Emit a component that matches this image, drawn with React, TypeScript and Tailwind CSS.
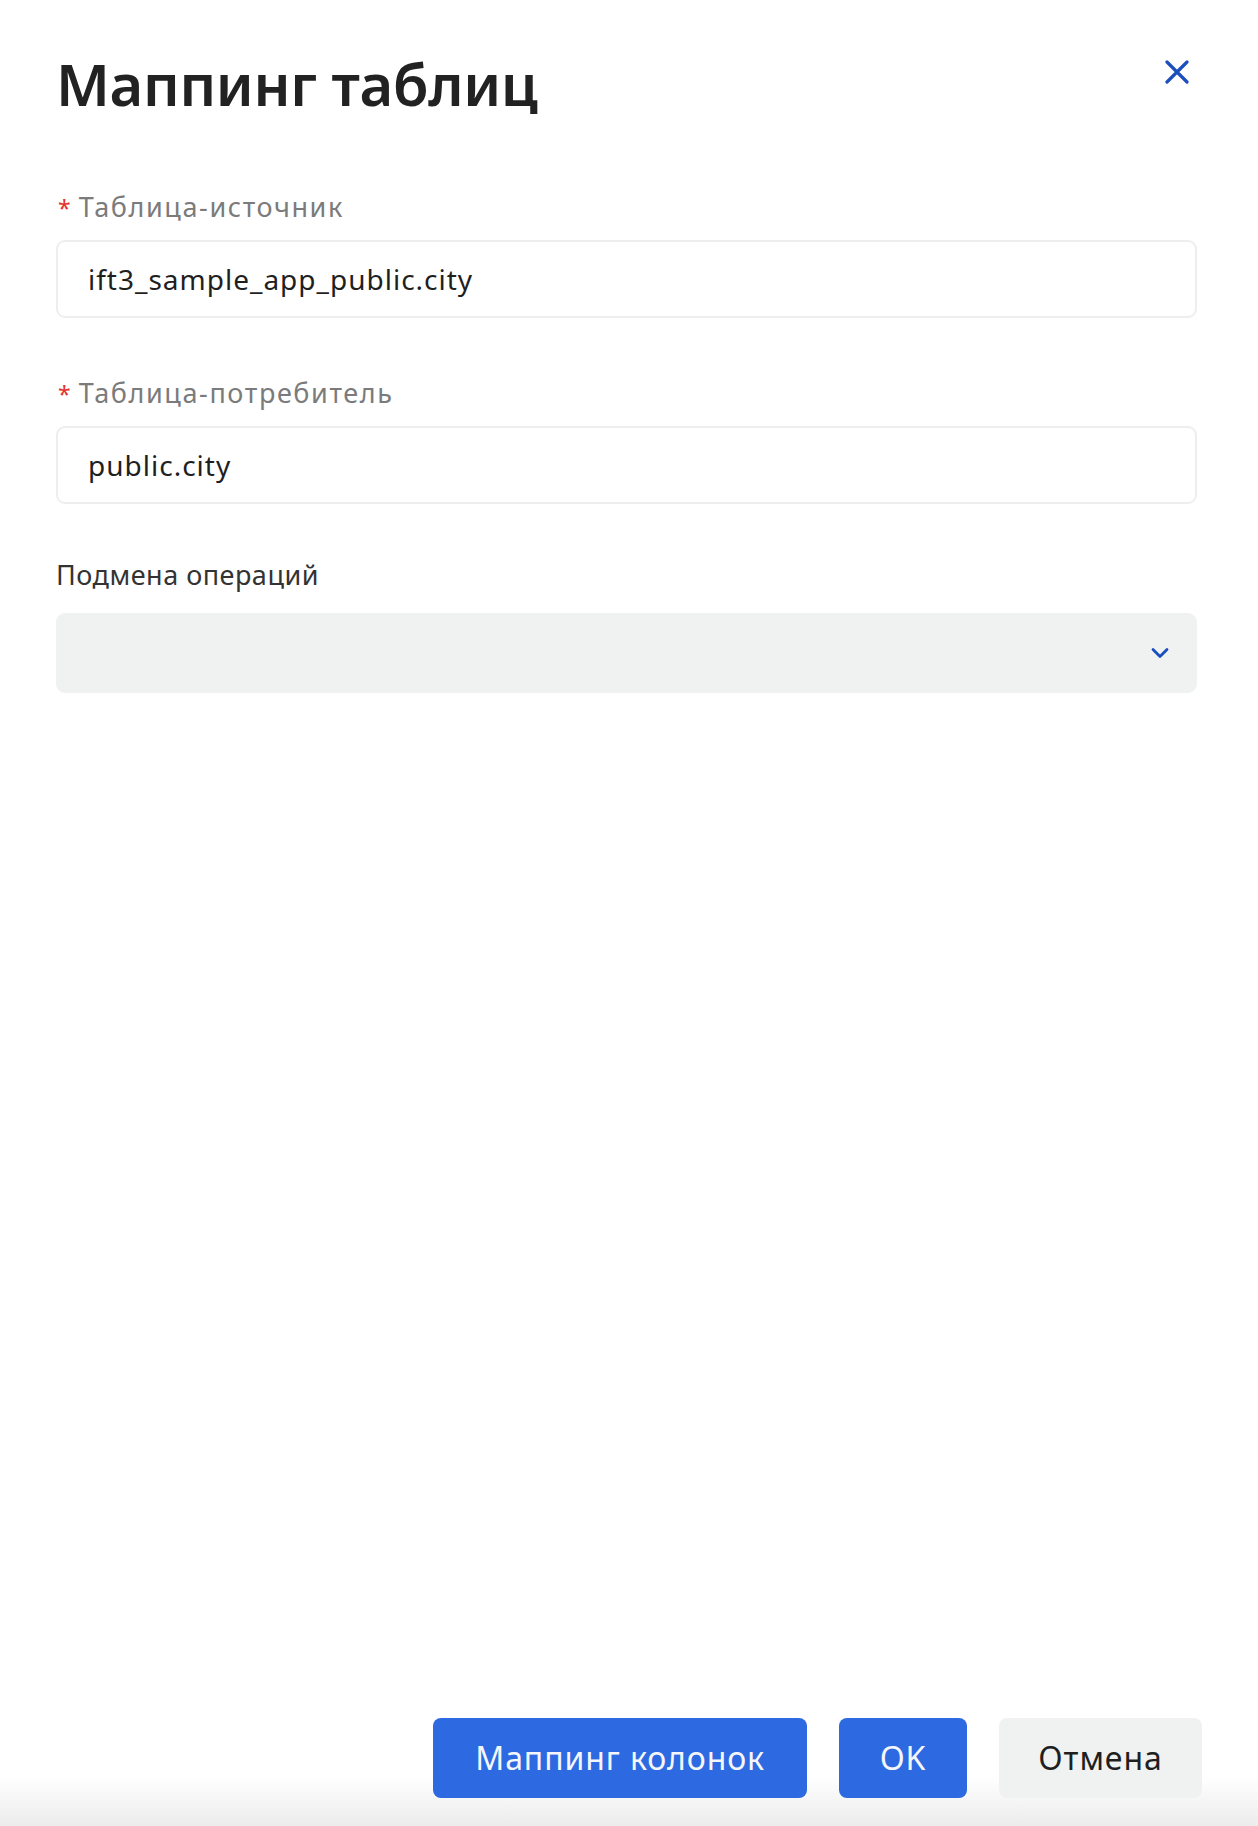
import React from "react";

const font = { fontFamily: '"Noto Sans", "Open Sans", sans-serif' };

function Label({ text, required }: { text: string; required?: boolean }) {
  return (
    <div className="flex items-baseline h-[36px] leading-[36px]">
      {required && <span className="text-[#e5322d] text-[23px] mr-[8px] ml-[2px]">*</span>}
      {required ? (
        <span className="text-[27px] tracking-[1.6px] text-[#7b7b7b]">{text}</span>
      ) : (
        <span className="text-[27px] tracking-[0.5px] text-[#333333]">{text}</span>
      )}
    </div>
  );
}

function Field({ value }: { value: string }) {
  return (
    <div className="h-[78px] rounded-[9px] border-2 border-[#eeeeee] bg-white flex items-center pl-[30px] text-[28px] tracking-[1px] text-[#1f1f1f]">
      {value}
    </div>
  );
}

export default function App() {
  return (
    <div className="w-[1258px] h-[1826px] bg-white flex flex-col text-[#222222]" style={font}>
      <div className="flex flex-col pl-[56px] pr-[61px] pt-[46px]">
        <div className="flex items-start justify-between">
          <h1 className="text-[58px] font-semibold leading-[76px] tracking-[-0.3px] text-[#222222]">Маппинг таблиц</h1>
          <button className="mt-[10px] mr-[4px] w-[32px] h-[32px] flex items-center justify-center">
            <svg width="24" height="24" viewBox="0 0 24 24" fill="none">
              <path d="M2 2L22 22M22 2L2 22" stroke="#1b4fbd" strokeWidth="3.2" strokeLinecap="round" />
            </svg>
          </button>
        </div>

        <div className="mt-[67px]">
          <Label text="Таблица-источник" required />
        </div>
        <div className="mt-[15px]">
          <Field value="ift3_sample_app_public.city" />
        </div>

        <div className="mt-[57px]">
          <Label text="Таблица-потребитель" required />
        </div>
        <div className="mt-[15px]">
          <Field value="public.city" />
        </div>

        <div className="mt-[53px]">
          <Label text="Подмена операций" />
        </div>
        <div className="mt-[20px]">
          <div className="h-[80px] rounded-[9px] bg-[#f0f1f1] flex items-center justify-end pr-[28px]">
            <svg width="18" height="12" viewBox="0 0 18 12" fill="none">
              <path d="M2 2.5L9 9.5L16 2.5" stroke="#1b4fbd" strokeWidth="2.8" strokeLinecap="round" strokeLinejoin="round" />
            </svg>
          </div>
        </div>
      </div>

      <div className="mt-auto h-[126px] pt-[18px] pr-[56px] flex justify-end gap-[32px] bg-[linear-gradient(to_bottom,#ffffff_0%,#ffffff_60%,#ececec_100%)]">
        <button className="h-[80px] px-[42px] rounded-[8px] bg-[#2d69e0] text-[#f4f6fb] text-[32px] tracking-[0.9px]">Маппинг колонок</button>
        <button className="h-[80px] w-[128px] rounded-[8px] bg-[#2d69e0] text-[#f4f6fb] text-[32px] tracking-[0.9px]">OK</button>
        <button className="h-[80px] w-[203px] rounded-[8px] bg-[#f0f1f1] text-[#1f1f1f] text-[32px] tracking-[0.9px]">Отмена</button>
      </div>
    </div>
  );
}
